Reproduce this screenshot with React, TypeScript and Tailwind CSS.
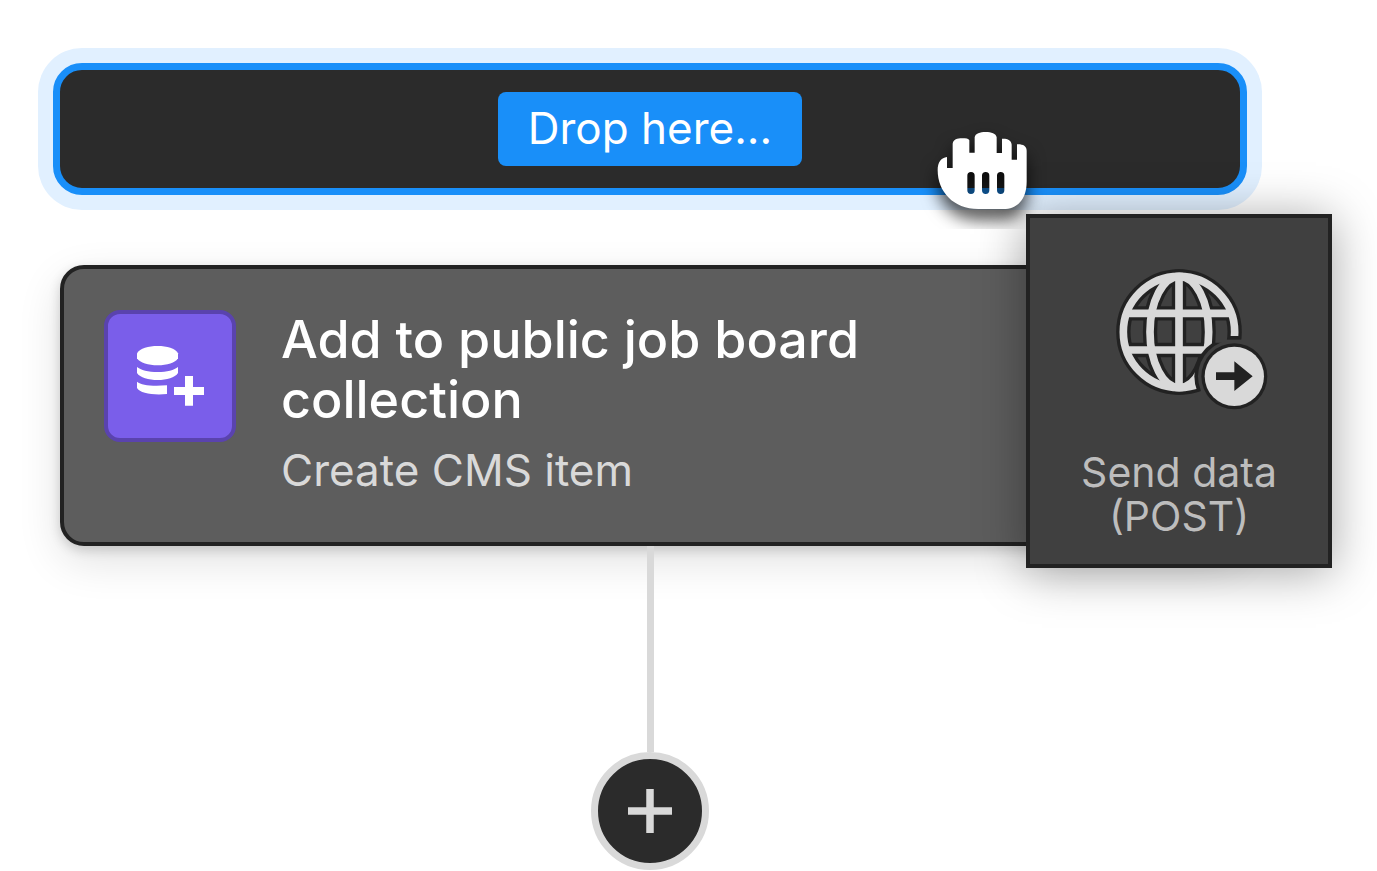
// One step of the workflow canvas: drop zone, action card, connector, and the block being dragged.

function DatabaseAddIcon() {
  return (
    <svg viewBox="141 153 201 180" className="h-[60px] w-[67px] fill-white" aria-hidden="true">
      <path d="M141 175C150 160 175 153 203 153S256 160 264 175V190C256 204 231 211 203 211S150 204 141 190Z" />
      <path d="M141 216C152 225 175 231 203 231S253 225 264 216V234C255 248 230 255 203 255S150 248 141 234Z" />
      <path d="M141 260C155 270 182 275 231 271V297C190 301 150 295 141 279Z" />
      <path d="M285 243h24v33h33v24h-33v32h-24v-32h-33v-24h33Z" />
    </svg>
  );
}

function GlobeLines() {
  return (
    <>
      <circle cx="267" cy="246" r="167" />
      <ellipse cx="268" cy="246" rx="88" ry="167" />
      <path d="M267 79V413M112 190H422M112 300H422" />
    </>
  );
}

function SendDataIcon() {
  return (
    <svg viewBox="-6 51 546 429" className="h-[143px] w-[182px]" aria-hidden="true">
      <defs>
        <mask id="globe-outline" maskUnits="userSpaceOnUse" x="-6" y="51" width="546" height="429">
          <rect x="-6" y="51" width="546" height="429" fill="white" />
          <circle cx="433" cy="379" r="109" fill="black" />
          <rect x="395" y="269" width="100" height="60" fill="black" />
        </mask>
        <mask id="globe-fill" maskUnits="userSpaceOnUse" x="-6" y="51" width="546" height="429">
          <rect x="-6" y="51" width="546" height="429" fill="white" />
          <circle cx="433" cy="379" r="120" fill="black" />
          <rect x="395" y="258" width="100" height="60" fill="black" />
        </mask>
      </defs>
      <g mask="url(#globe-outline)" fill="none" stroke="#222222" strokeWidth="43">
        <GlobeLines />
      </g>
      <g mask="url(#globe-fill)" fill="none" stroke="#d9d9d9" strokeWidth="23">
        <GlobeLines />
      </g>
      <circle cx="433" cy="379" r="99" fill="#222222" />
      <circle cx="433" cy="379" r="89" fill="#d9d9d9" />
      <path d="M378 367H433V334L488 379L433 423V390H378Z" fill="#222222" />
    </svg>
  );
}

function GrabCursor() {
  return (
    <svg
      viewBox="60 30 390 327"
      className="pointer-events-none absolute -top-[94px] -left-[106px] h-[109px] w-[130px]"
      aria-hidden="true"
    >
      <defs>
        <filter
          id="grab-shadow"
          filterUnits="userSpaceOnUse"
          x="0"
          y="0"
          width="540"
          height="480"
          colorInterpolationFilters="sRGB"
        >
          <feDropShadow dx="0" dy="30" stdDeviation="25" floodColor="#000" floodOpacity="0.75" />
        </filter>
      </defs>
      <path
        filter="url(#grab-shadow)"
        fill="white"
        fillRule="evenodd"
        d="M113 180C113 156 124 143 141 141V174H158V101C160 88 172 85 186 85C198 85 206 86 208 91V128H224V82C226 70 240 66 257 66S288 70 290 82V129H306V86C322 85 334 90 335 104V149H351V103C368 102 380 108 380 122V215C380 270 350 297 310 297H235C160 297 113 245 113 180Z
          M202 197V241A11 11 0 0 0 224 241V197A11 11 0 0 0 202 197Z
          M246 197V241A11 11 0 0 0 268 241V197A11 11 0 0 0 246 197Z
          M291 197V241A11 11 0 0 0 313 241V197A11 11 0 0 0 291 197Z"
      />
    </svg>
  );
}

function DropZone() {
  return (
    <div className="flex justify-center rounded-[29px] border-[7px] border-[#198ff9] bg-[#2b2b2b] py-[22px] shadow-[0_0_0_15px_#e1f0ff]">
      <span className="rounded-lg bg-[#198ff9] px-[30px] pb-0.5 text-[44px] leading-[72px] text-white">
        Drop here...
      </span>
    </div>
  );
}

function ActionCard() {
  return (
    <article className="mx-[7px] mt-[70px] flex gap-[45px] rounded-3xl border-4 border-[#222222] bg-[#5d5d5d] px-10 pt-[41px] pb-11 shadow-[0_4px_12px_rgba(0,0,0,0.16),0_15px_44px_rgba(0,0,0,0.12)]">
      <div className="grid size-[132px] shrink-0 place-items-center rounded-2xl border-4 border-[#5a43ae] bg-[#7a5eea]">
        <DatabaseAddIcon />
      </div>
      <div className="max-w-[640px]">
        <h2 className="text-[52px] leading-[60px] font-medium text-white">
          Add to public job board collection
        </h2>
        <p className="mt-3 text-[44px] leading-14 text-[#d9d9d9]">Create CMS item</p>
      </div>
    </article>
  );
}

function DraggedBlock() {
  return (
    <div className="absolute top-[214px] right-[45px] w-[306px] shadow-[0_4px_46px_rgba(0,0,0,0.36)]">
      <GrabCursor />
      <div
        draggable
        className="relative flex cursor-grabbing flex-col items-center border-4 border-[#222222] bg-[#404040] pt-[49px] pb-[26px]"
      >
        <SendDataIcon />
        <p className="mt-10 text-center text-[41px] leading-11 text-[#bdbdbd]">
          Send data
          <br />
          (POST)
        </p>
      </div>
    </div>
  );
}

export default function App() {
  return (
    <main className="relative overflow-hidden bg-white pt-[63px] pr-[130px] pl-[53px] font-['Inter',sans-serif]">
      <DropZone />
      <ActionCard />
      <div className="relative flex flex-col items-center">
        <div className="h-[206px] w-[7px] bg-[#d9d9d9]" />
        <button
          type="button"
          aria-label="Add step"
          className="grid size-[118px] place-items-center rounded-full border-[7px] border-[#d9d9d9] bg-[#2b2b2b]"
        >
          <svg viewBox="0 0 44 44" className="size-11" aria-hidden="true">
            <path d="M22 0V44M0 22H44" stroke="#d9d9d9" strokeWidth="7.5" />
          </svg>
        </button>
      </div>
      <DraggedBlock />
    </main>
  );
}
